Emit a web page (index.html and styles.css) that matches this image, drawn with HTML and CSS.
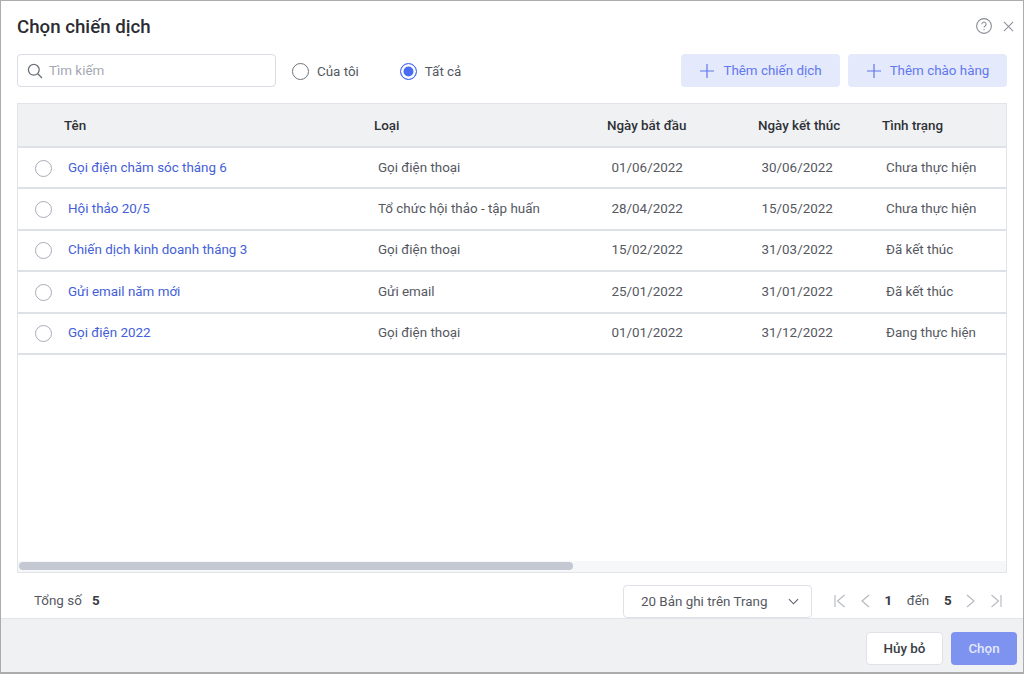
FILE: index.html
```html
<!DOCTYPE html>
<html lang="vi">
<head>
    <meta charset="UTF-8">
    <meta name="viewport" content="width=device-width, initial-scale=1.0">
    <title>Chọn chiến dịch</title>
    <link rel="stylesheet" href="styles.css">
</head>
<body>
    <div class="dialog">
        <div class="dialog-head">
            <h1>Chọn chiến dịch</h1>
            <div class="head-icons">
                <svg width="16" height="16" viewBox="0 0 16 16" fill="none" stroke="#8a8d96" stroke-width="1.1">
                    <circle cx="8" cy="8" r="7.4"/>
                    <path d="M5.9 6.2a2.1 2.1 0 1 1 3.2 1.8c-.7.4-1.1.8-1.1 1.6"/>
                    <path d="M8 11v1.2"/>
                </svg>
                <svg width="11" height="11" viewBox="0 0 12 12" fill="none" stroke="#8a8d96" stroke-width="1.1">
                    <path d="M1 1l10 10M11 1L1 11"/>
                </svg>
            </div>
        </div>

        <div class="toolbar">
            <div class="search">
                <svg width="16" height="16" viewBox="0 0 16 16" fill="none" stroke="#6b6f7a" stroke-width="1.3">
                    <circle cx="6.8" cy="6.8" r="5.4"/>
                    <path d="M10.8 10.8l4.2 4.2"/>
                </svg>
                <span>Tìm kiếm</span>
            </div>
            <label class="option"><span class="radio-big"></span>Của tôi</label>
            <label class="option option-on"><span class="radio-big radio-on"></span>Tất cả</label>
            <div class="toolbar-actions">
                <button class="add-btn">
                    <svg width="14" height="14" viewBox="0 0 14 14" stroke="#5f78ee" stroke-width="1.2"><path d="M7 0v14M0 7h14"/></svg>
                    Thêm chiến dịch
                </button>
                <button class="add-btn">
                    <svg width="14" height="14" viewBox="0 0 14 14" stroke="#5f78ee" stroke-width="1.2"><path d="M7 0v14M0 7h14"/></svg>
                    Thêm chào hàng
                </button>
            </div>
        </div>

        <div class="grid">
            <div class="row row-head">
                <div></div>
                <div>Tên</div>
                <div>Loại</div>
                <div>Ngày bắt đầu</div>
                <div>Ngày kết thúc</div>
                <div>Tình trạng</div>
            </div>
            <div class="row">
                <div><span class="radio"></span></div>
                <div class="link">Gọi điện chăm sóc tháng 6</div>
                <div>Gọi điện thoại</div>
                <div>01/06/2022</div>
                <div>30/06/2022</div>
                <div>Chưa thực hiện</div>
            </div>
            <div class="row">
                <div><span class="radio"></span></div>
                <div class="link">Hội thảo 20/5</div>
                <div>Tổ chức hội thảo - tập huấn</div>
                <div>28/04/2022</div>
                <div>15/05/2022</div>
                <div>Chưa thực hiện</div>
            </div>
            <div class="row">
                <div><span class="radio"></span></div>
                <div class="link">Chiến dịch kinh doanh tháng 3</div>
                <div>Gọi điện thoại</div>
                <div>15/02/2022</div>
                <div>31/03/2022</div>
                <div>Đã kết thúc</div>
            </div>
            <div class="row">
                <div><span class="radio"></span></div>
                <div class="link">Gửi email năm mới</div>
                <div>Gửi email</div>
                <div>25/01/2022</div>
                <div>31/01/2022</div>
                <div>Đã kết thúc</div>
            </div>
            <div class="row">
                <div><span class="radio"></span></div>
                <div class="link">Gọi điện 2022</div>
                <div>Gọi điện thoại</div>
                <div>01/01/2022</div>
                <div>31/12/2022</div>
                <div>Đang thực hiện</div>
            </div>
            <div class="scroll-track"><div class="scroll-thumb"></div></div>
        </div>

        <div class="pager">
            <div class="total">Tổng số <b>5</b></div>
            <div class="page-size">
                <span>20 Bản ghi trên Trang</span>
                <svg width="11" height="7" viewBox="0 0 12 7" fill="none" stroke="#5c5f68" stroke-width="1.2"><path d="M1 1l5 5 5-5"/></svg>
            </div>
            <div class="page-nav">
                <svg width="12" height="14" viewBox="0 0 12 14" fill="none" stroke="#b4b7bf" stroke-width="1.1"><path d="M1 1v12M10.500 1L3.500 7l7 6"/></svg>
                <svg width="9" height="14" viewBox="0 0 9 14" fill="none" stroke="#b4b7bf" stroke-width="1.1"><path d="M8 1L1 7l7 6"/></svg>
                <b>1</b>
                <span>đến</span>
                <b>5</b>
                <svg width="9" height="14" viewBox="0 0 9 14" fill="none" stroke="#b4b7bf" stroke-width="1.1"><path d="M1 1l7 6-7 6"/></svg>
                <svg width="12" height="14" viewBox="0 0 12 14" fill="none" stroke="#b4b7bf" stroke-width="1.1"><path d="M11 1v12M1.500 1l7 6-7 6"/></svg>
            </div>
        </div>

        <div class="dialog-foot">
            <button class="btn-cancel">Hủy bỏ</button>
            <button class="btn-ok">Chọn</button>
        </div>
    </div>
</body>
</html>
```

FILE: styles.css
```css
* {
    box-sizing: border-box;
}
html, body {
    margin: 0;
    height: 674px;
    overflow: hidden;
}
body {
    font-family: Roboto, "Noto Sans", sans-serif;
    font-size: 13.4px;
    color: #55585f;
    background: #fff;
}
.dialog {
    height: 674px;
    display: flex;
    flex-direction: column;
    border: 1px solid #acacac;
    border-bottom-width: 2px;
}
.dialog-head {
    height: 53px;
    padding: 0 9px 2px 16px;
    display: flex;
    align-items: center;
    justify-content: space-between;
}
h1 {
    margin: 0;
    font-size: 18.7px;
    font-weight: 500;
    line-height: 24px;
    color: #2b2d33;
}
.head-icons {
    display: flex;
    align-items: center;
    gap: 11px;
    margin-top: -1px;
    margin-left: 1px;
}
.toolbar {
    height: 33px;
    padding: 0 16px;
    display: flex;
    align-items: center;
}
.search {
    width: 259px;
    height: 33px;
    padding: 0 9px;
    display: flex;
    align-items: center;
    gap: 6px;
    border: 1px solid #dadce3;
    border-radius: 4px;
    color: #a4a8b2;
}
.option {
    display: flex;
    align-items: center;
    gap: 8px;
    margin-left: 16px;
    margin-top: 2px;
}
.option-on {
    margin-left: 41px;
}
.radio-big {
    width: 17px;
    height: 17px;
    border: 1.5px solid #6f727b;
    border-radius: 50%;
}
.radio-on {
    border-color: #4a6cf0;
    background: #4a6cf0;
    box-shadow: inset 0 0 0 2.5px #fff;
}
.toolbar-actions {
    margin-left: auto;
    display: flex;
    gap: 8px;
}
.add-btn {
    width: 159px;
    height: 33px;
    padding: 0 0 0 1px;
    display: flex;
    align-items: center;
    justify-content: center;
    gap: 9px;
    border: 0;
    border-radius: 4px;
    background: #e5e9fc;
    color: #5f78ee;
    font: inherit;
}
.grid {
    margin: 16px 16px 0;
    height: 470px;
    display: flex;
    flex-direction: column;
    border: 1px solid #e2e4ea;
}
.row {
    height: 41.4px;
    flex: none;
    display: grid;
    grid-template-columns: 50px 310px 233.5px 150px 124.5px 1fr;
    align-items: center;
    border-bottom: 2px solid #dfe1e8;
}
.row-head {
    height: 44px;
    grid-template-columns: 46px 310px 233px 151px 124px 1fr;
    background: #f0f1f3;
    color: #2f3138;
    font-weight: 500;
}
.row:not(.row-head) > div {
    margin-top: -1px;
}
.link {
    color: #4460d8;
}
.radio {
    display: block;
    width: 17px;
    height: 17px;
    margin: 2px 0 0 16.5px;
    border: 1px solid #a9adb8;
    border-radius: 50%;
}
.scroll-track {
    margin-top: auto;
    height: 11px;
    padding: 1px;
    background: #f6f7f8;
}
.scroll-thumb {
    width: 554px;
    height: 8px;
    border-radius: 4px;
    background: #c3c8d2;
}
.pager {
    flex: 1;
    padding: 12px 21px 0 33px;
    display: flex;
    align-items: flex-start;
}
.total {
    margin-top: 8px;
}
.total b {
    margin-left: 7px;
    font-weight: 700;
    color: #3a3c44;
}
.page-size {
    width: 189px;
    height: 33px;
    margin-left: auto;
    padding: 0 12px 1px 17px;
    display: flex;
    align-items: center;
    justify-content: space-between;
    border: 1px solid #dfe1e8;
    border-radius: 4px;
    background: #fff;
}
.page-nav {
    width: 168px;
    margin-left: 22px;
    margin-top: 8px;
    display: flex;
    align-items: center;
    justify-content: space-between;
}
.page-nav b {
    font-weight: 700;
    color: #3a3c44;
}
.dialog-foot {
    height: 54px;
    flex: none;
    padding: 13px 6px 0 0;
    display: flex;
    justify-content: flex-end;
    align-items: flex-start;
    gap: 8px;
    background: #f0f1f3;
    border-top: 1px solid #e2e4ea;
}
.dialog-foot button {
    height: 33px;
    border-radius: 4px;
    font: inherit;
    font-weight: 500;
}
.btn-cancel {
    width: 77px;
    border: 1px solid #e0e2e8;
    background: #fff;
    color: #3a3c44;
}
.btn-ok {
    width: 66px;
    border: 0;
    background: #7e93f0;
    color: #e3e8fd;
}
```
